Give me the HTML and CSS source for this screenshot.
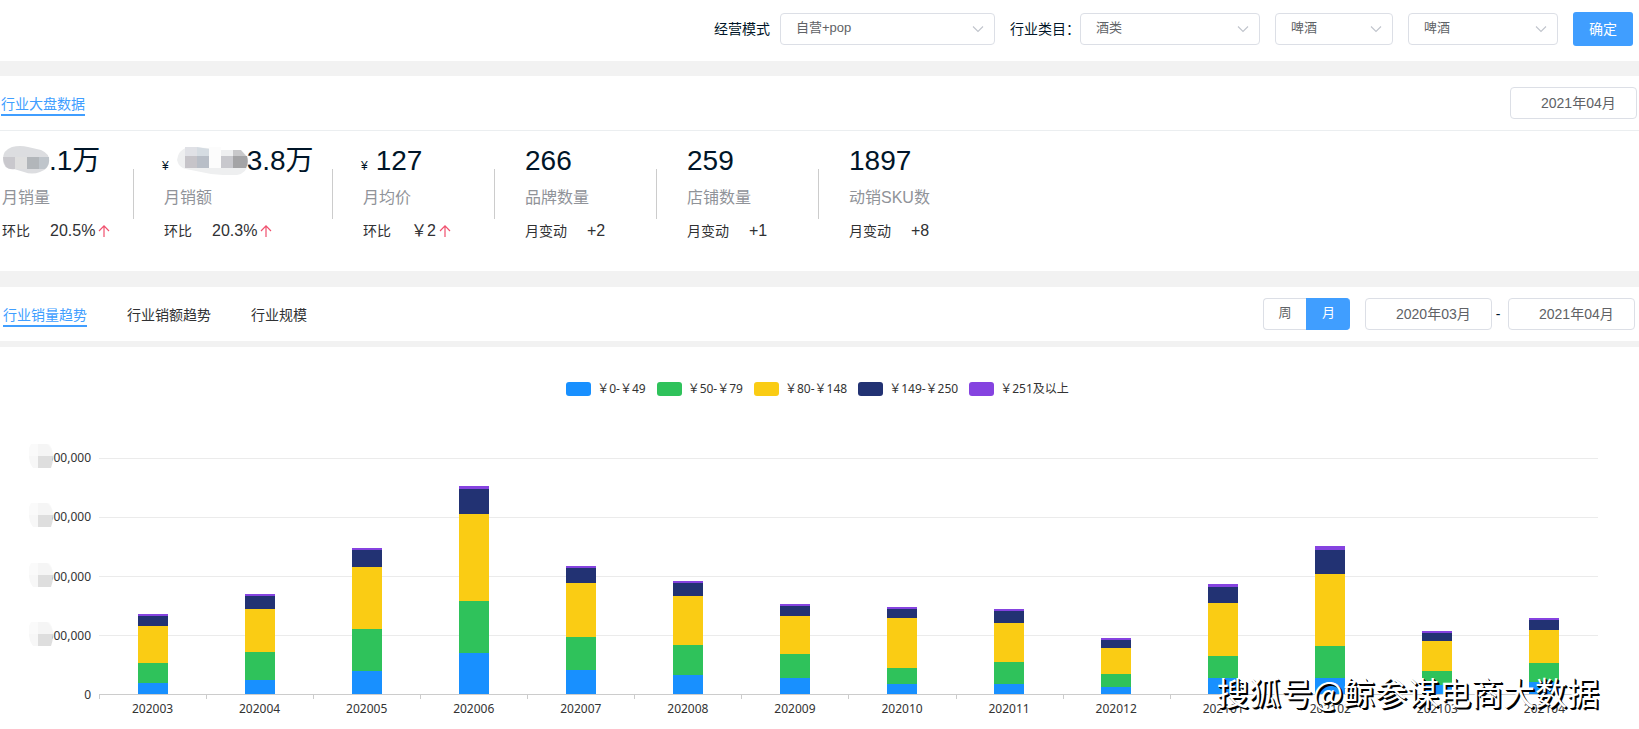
FILE: index.html
```html
<!DOCTYPE html>
<html lang="zh-CN">
<head>
<meta charset="utf-8">
<meta name="viewport" content="width=device-width, initial-scale=1">
<title>行业大盘数据</title>
<link rel="stylesheet" href="styles.css">
</head>
<body>
<svg class="defs" width="0" height="0" aria-hidden="true">
  <symbol id="chevron" viewBox="0 0 12 8"><path d="M1 1.5 6 6.5 11 1.5" fill="none" stroke="currentColor" stroke-width="1.1"/></symbol>
  <symbol id="up" viewBox="0 0 12 14"><path d="M6 13V2M1 7 6 1.8 11 7" fill="none" stroke="currentColor" stroke-width="1.2"/></symbol>
  <symbol id="mask" viewBox="0 0 24 24"><path d="M2 0h18q4 4 4 12H0V4z" fill="#fafafa"/><path d="M9 0h9q5 3 6 12H9z" fill="#f5f5f5"/><path d="M0 12h9v12H4q-4-5-4-12z" fill="#f7f7f7"/><path d="M9 12h15q0 7-2 12H9z" fill="#dedede"/></symbol>
</svg>

<form class="filters">
  <label class="filter-label" for="mode">经营模式</label>
  <span class="select select-mode"><select id="mode"><option>自营+pop</option></select><svg class="chevron"><use href="#chevron"/></svg></span>
  <label class="filter-label filter-label-category" for="cat1">行业类目：</label>
  <span class="select select-first"><select id="cat1"><option>酒类</option></select><svg class="chevron"><use href="#chevron"/></svg></span>
  <span class="select select-second"><select aria-label="二级类目"><option>啤酒</option></select><svg class="chevron"><use href="#chevron"/></svg></span>
  <span class="select select-third"><select aria-label="三级类目"><option>啤酒</option></select><svg class="chevron"><use href="#chevron"/></svg></span>
  <button class="confirm" type="button">确定</button>
</form>

<section class="panel">
  <header class="panel-head overview-head">
    <h2 class="tab tab-active">行业大盘数据</h2>
    <input class="date" type="text" value="2021年04月" aria-label="月份">
  </header>
  <div class="metrics">
    <div class="metric">
      <div class="metric-body">
        <div class="metric-number"><svg class="mosaic" width="49" height="30" viewBox="0 0 49 30"><path d="M10 2Q18 0 26 2L39 5Q48 9 47 16 47 24 38 27 30 30 22 27L12 24Q1 25 1 14 1 5 10 2z" fill="#dcdde0"/><path d="M1 12h12v12Q2 26 1 12z" fill="#c9c8cd"/><path d="M25 12h12v12H25z" fill="#b2b6ba"/><path d="M37 12h10q1 8-4 12h-6z" fill="#bfc5cb"/><path d="M13 12h12v12H13z" fill="#dfdfdf"/></svg>.1万</div>
        <div class="metric-label">月销量</div>
        <div class="metric-change">环比<span class="value">20.5%</span><svg class="up"><use href="#up"/></svg></div>
      </div><span class="divider"></span>
    </div>
    <div class="metric">
      <div class="metric-body">
        <div class="metric-number metric-money"><span class="yen">¥</span><svg class="mosaic" width="72" height="30" viewBox="0 0 72 30"><path d="M11 2Q1 5 0 15 2 23 9 24L34 29 46 30H60Q70 28 71 18 71 8 62 5H44L31 3z" fill="#eeeff0"/><path d="M8 2h12v9H8z" fill="#e0e1e6"/><path d="M20 2l12 2v7H20z" fill="#d5dce2"/><path d="M8 11h12v12H8z" fill="#c6c4c9"/><path d="M20 11h12v12H20z" fill="#b8bec7"/><path d="M32 2h12v21H32z" fill="#fcfcfc"/><path d="M44 11h12v12H44z" fill="#c8c8cd"/><path d="M56 5h8l5 6H56z" fill="#c8c8ca"/><path d="M56 11h14q2 6-1 12H56z" fill="#a4a4a6"/></svg>3.8万</div>
        <div class="metric-label">月销额</div>
        <div class="metric-change">环比<span class="value">20.3%</span><svg class="up"><use href="#up"/></svg></div>
      </div><span class="divider"></span>
    </div>
    <div class="metric">
      <div class="metric-body">
        <div class="metric-number metric-money"><span class="yen">¥</span>127</div>
        <div class="metric-label">月均价</div>
        <div class="metric-change">环比<span class="value">￥2</span><svg class="up"><use href="#up"/></svg></div>
      </div><span class="divider"></span>
    </div>
    <div class="metric">
      <div class="metric-body">
        <div class="metric-number">266</div>
        <div class="metric-label">品牌数量</div>
        <div class="metric-change">月变动<span class="value">+2</span></div>
      </div><span class="divider"></span>
    </div>
    <div class="metric">
      <div class="metric-body">
        <div class="metric-number">259</div>
        <div class="metric-label">店铺数量</div>
        <div class="metric-change">月变动<span class="value">+1</span></div>
      </div><span class="divider"></span>
    </div>
    <div class="metric">
      <div class="metric-body">
        <div class="metric-number">1897</div>
        <div class="metric-label">动销SKU数</div>
        <div class="metric-change">月变动<span class="value">+8</span></div>
      </div>
    </div>
  </div>
</section>

<section class="panel trend-head panel-head">
  <nav class="tabs">
    <button class="tab tab-active" type="button">行业销量趋势</button>
    <button class="tab" type="button">行业销额趋势</button>
    <button class="tab" type="button">行业规模</button>
  </nav>
  <div class="range">
    <div class="segmented">
      <input type="radio" name="unit" id="week"><label for="week">周</label>
      <input type="radio" name="unit" id="month" checked><label for="month">月</label>
    </div>
    <input class="date" type="text" value="2020年03月" aria-label="开始月份">
    <span class="dash">-</span>
    <input class="date" type="text" value="2021年04月" aria-label="结束月份">
  </div>
</section>

<section class="chart">
  <ul class="legend">
    <li><i class="swatch s1"></i>￥0-￥49</li>
    <li><i class="swatch s2"></i>￥50-￥79</li>
    <li><i class="swatch s3"></i>￥80-￥148</li>
    <li><i class="swatch s4"></i>￥149-￥250</li>
    <li><i class="swatch s5"></i>￥251及以上</li>
  </ul>
  <div class="chart-body">
    <div class="y-axis">
      <span>000,000<svg class="y-mask"><use href="#mask"/></svg></span>
      <span>000,000<svg class="y-mask"><use href="#mask"/></svg></span>
      <span>000,000<svg class="y-mask"><use href="#mask"/></svg></span>
      <span>000,000<svg class="y-mask"><use href="#mask"/></svg></span>
      <span>0</span>
    </div>
    <div class="plot">
      <div class="gridlines"><i></i><i></i><i></i><i></i></div>
      <div class="bars">
        <div class="bar"><i class="s5" style="height:2px"></i><i class="s4" style="height:10px"></i><i class="s3" style="height:37px"></i><i class="s2" style="height:20px"></i><i class="s1" style="height:11px"></i></div>
        <div class="bar"><i class="s5" style="height:2px"></i><i class="s4" style="height:13px"></i><i class="s3" style="height:43px"></i><i class="s2" style="height:28px"></i><i class="s1" style="height:14px"></i></div>
        <div class="bar"><i class="s5" style="height:2px"></i><i class="s4" style="height:17px"></i><i class="s3" style="height:62px"></i><i class="s2" style="height:42px"></i><i class="s1" style="height:23px"></i></div>
        <div class="bar"><i class="s5" style="height:3px"></i><i class="s4" style="height:25px"></i><i class="s3" style="height:87px"></i><i class="s2" style="height:52px"></i><i class="s1" style="height:41px"></i></div>
        <div class="bar"><i class="s5" style="height:2px"></i><i class="s4" style="height:15px"></i><i class="s3" style="height:54px"></i><i class="s2" style="height:33px"></i><i class="s1" style="height:24px"></i></div>
        <div class="bar"><i class="s5" style="height:2px"></i><i class="s4" style="height:13px"></i><i class="s3" style="height:49px"></i><i class="s2" style="height:30px"></i><i class="s1" style="height:19px"></i></div>
        <div class="bar"><i class="s5" style="height:2px"></i><i class="s4" style="height:10px"></i><i class="s3" style="height:38px"></i><i class="s2" style="height:24px"></i><i class="s1" style="height:16px"></i></div>
        <div class="bar"><i class="s5" style="height:2px"></i><i class="s4" style="height:9px"></i><i class="s3" style="height:50px"></i><i class="s2" style="height:16px"></i><i class="s1" style="height:10px"></i></div>
        <div class="bar"><i class="s5" style="height:2px"></i><i class="s4" style="height:12px"></i><i class="s3" style="height:39px"></i><i class="s2" style="height:22px"></i><i class="s1" style="height:10px"></i></div>
        <div class="bar"><i class="s5" style="height:2px"></i><i class="s4" style="height:8px"></i><i class="s3" style="height:26px"></i><i class="s2" style="height:13px"></i><i class="s1" style="height:7px"></i></div>
        <div class="bar"><i class="s5" style="height:3px"></i><i class="s4" style="height:16px"></i><i class="s3" style="height:53px"></i><i class="s2" style="height:22px"></i><i class="s1" style="height:16px"></i></div>
        <div class="bar"><i class="s5" style="height:4px"></i><i class="s4" style="height:24px"></i><i class="s3" style="height:72px"></i><i class="s2" style="height:32px"></i><i class="s1" style="height:16px"></i></div>
        <div class="bar"><i class="s5" style="height:2px"></i><i class="s4" style="height:8px"></i><i class="s3" style="height:30px"></i><i class="s2" style="height:14px"></i><i class="s1" style="height:9px"></i></div>
        <div class="bar"><i class="s5" style="height:2px"></i><i class="s4" style="height:10px"></i><i class="s3" style="height:33px"></i><i class="s2" style="height:19px"></i><i class="s1" style="height:12px"></i></div>
      </div>
      <div class="x-axis">
        <span>202003</span><span>202004</span><span>202005</span><span>202006</span><span>202007</span><span>202008</span><span>202009</span><span>202010</span><span>202011</span><span>202012</span><span>202101</span><span>202102</span><span>202103</span><span>202104</span>
      </div>
    </div>
  </div>
  <div class="watermark">搜狐号@鲸参谋电商大数据</div>
</section>
</body>
</html>
```

FILE: styles.css
```css
* { box-sizing: border-box; }

body {
  display: flex;
  flex-direction: column;
  min-height: 100vh;
  margin: 0;
  background: #f2f2f2;
  color: #303133;
  font: 14px/20px "Liberation Sans", "Noto Sans CJK SC", sans-serif;
}

.defs { display: none; }

button, input, select { font-family: inherit; }

/* Filter bar */
.filters {
  display: flex;
  align-items: center;
  justify-content: flex-end;
  height: 61px;
  padding: 0 6px 4px 0;
  margin-bottom: 15px;
  background: #fff;
}
.filter-label { color: #001528; margin-right: 10px; }
.filter-label-category { margin-right: 0; }

.select {
  display: grid;
  align-items: center;
  height: 32px;
  margin-right: 15px;
}
.select select {
  grid-area: 1 / 1;
  width: 100%;
  height: 32px;
  padding: 0 30px 2px 15px;
  border: 1px solid #dcdfe6;
  border-radius: 4px;
  background: #fff;
  color: #606266;
  font-size: 13px;
  appearance: none;
}
.select-mode { width: 215px; }
.select-first { width: 180px; }
.select-second { width: 118px; }
.select-third { width: 150px; }
.chevron {
  grid-area: 1 / 1;
  justify-self: end;
  width: 12px;
  height: 8px;
  margin-right: 11px;
  color: #c0c4cc;
  pointer-events: none;
}
.confirm {
  width: 60px;
  height: 34px;
  padding: 0 0 2px;
  border: 0;
  border-radius: 3px;
  background: #409eff;
  color: #fff;
  font-size: 14px;
}

/* Panels */
.panel { background: #fff; }
.panel-head {
  display: flex;
  align-items: center;
  justify-content: space-between;
}
.overview-head {
  height: 55px;
  padding: 0 2px 0 1px;
  border-bottom: 1px solid #ebeef0;
}
.trend-head {
  height: 54px;
  padding: 0 4px 0 3px;
  margin: 16px 0 6px;
}
.tab {
  margin: 0;
  padding: 4px 0 0;
  border: 0;
  border-bottom: 2px solid transparent;
  background: none;
  color: #303133;
  font-size: 14px;
  font-weight: 400;
  line-height: 20px;
}
.tab-active { border-color: #409eff; color: #409eff; }
.tabs { display: flex; gap: 40px; }

.date {
  width: 127px;
  height: 32px;
  padding: 0 0 2px 30px;
  border: 1px solid #dcdfe6;
  border-radius: 4px;
  background: #fff;
  color: #606266;
  font-size: 14px;
}

/* Overview metrics */
.metrics {
  display: grid;
  grid-template-columns: 162px 199px repeat(4, 162px);
  padding: 9px 0 28px 2px;
}
.metric { display: flex; }
.metric-body { flex: 1; min-width: 0; }
.divider {
  width: 1px;
  height: 50px;
  margin: 29px 30px 0 0;
  background: #ccc;
}
.metric-number {
  height: 41px;
  color: #001528;
  font-size: 28px;
  line-height: 41px;
  white-space: nowrap;
}
.metric-money { margin-left: -2px; }
.mosaic { margin-right: -2px; vertical-align: -5px; }
.yen { margin-right: 8px; font-size: 12px; }
.metric-label {
  margin: 5px 0 9px;
  color: #909399;
  font-size: 16px;
  line-height: 24px;
}
.metric-change {
  display: flex;
  align-items: center;
  height: 24px;
  white-space: nowrap;
}
.value { margin-left: 20px; font-size: 16px; }
.up {
  width: 12px;
  height: 14px;
  margin-left: 3px;
  color: #f0506e;
}

/* Period controls */
.range { display: flex; align-items: center; }
.segmented { display: flex; margin-right: 15px; }
.segmented input {
  position: absolute;
  opacity: 0;
  pointer-events: none;
}
.segmented label {
  width: 43px;
  height: 32px;
  border: 1px solid #dcdfe6;
  border-right: 0;
  border-radius: 4px 0 0 4px;
  background: #fff;
  color: #606266;
  font-size: 13px;
  line-height: 28px;
  text-align: center;
}
.segmented label:last-child { width: 44px; border-radius: 0 4px 4px 0; }
.segmented input:checked + label {
  border-color: #409eff;
  background: #409eff;
  color: #fff;
}
.dash { width: 16px; padding-right: 4px; color: #001528; text-align: center; }

/* Stacked bar chart */
.s1 { background: #1890ff; }
.s2 { background: #2fc25b; }
.s3 { background: #facc14; }
.s4 { background: #223273; }
.s5 { background: #8543e0; }

.chart {
  position: relative;
  flex: 1;
  padding: 32px 41px 0 0;
  background: #fff;
  color: #333;
  font: 12px/20px "Noto Sans", "Noto Sans CJK SC", sans-serif;
}
.legend {
  display: flex;
  justify-content: center;
  gap: 11px;
  margin: 0 0 49px;
  padding: 0 0 0 37px;
  list-style: none;
}
.legend li { display: flex; align-items: center; gap: 6px; }
.swatch { width: 25px; height: 14px; border-radius: 3px; }

.chart-body { display: flex; }
.y-axis {
  display: flex;
  flex-direction: column;
  justify-content: space-between;
  width: 91px;
  height: 257px;
  margin-right: 8px;
  text-align: right;
}
.y-axis span { position: relative; }
.y-mask {
  position: absolute;
  top: -4px;
  left: 29px;
  width: 24px;
  height: 24px;
}
.plot {
  display: grid;
  grid-template-rows: 237px auto;
  flex: 1;
  padding-top: 10px;
}
.gridlines {
  display: flex;
  flex-direction: column;
  grid-area: 1 / 1;
  border-bottom: 1px solid #ccc;
}
.gridlines i { flex: 1; border-top: 1px solid #ebebeb; }
.bars {
  display: grid;
  grid-template-columns: repeat(14, 1fr);
  grid-area: 1 / 1;
  align-items: end;
  justify-items: center;
  padding-bottom: 1px;
}
.bar { width: 30px; }
.bar i { display: block; }
.x-axis {
  display: grid;
  grid-template-columns: repeat(14, 1fr);
  text-align: center;
}
.x-axis span {
  padding-top: 4px;
  background: linear-gradient(#ccc, #ccc) 0 0 / 1px 4px no-repeat;
}

.watermark {
  position: absolute;
  right: 40px;
  bottom: 18px;
  color: #fff;
  font: 32px/40px "Noto Sans CJK SC", sans-serif;
  text-shadow: 1px 1px 0 #000, 2px 2px 0 #000;
  white-space: nowrap;
}
```
